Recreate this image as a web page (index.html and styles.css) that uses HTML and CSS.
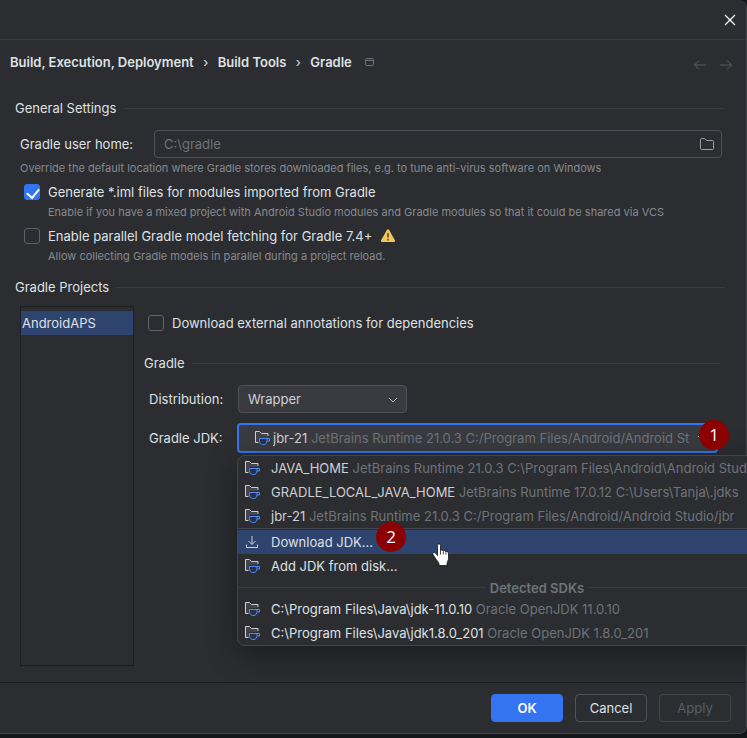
FILE: index.html
```html
<!DOCTYPE html>
<html lang="en">
<head>
    <meta charset="UTF-8">
    <meta name="viewport" content="width=device-width, initial-scale=1.0">
    <title>Settings - Gradle</title>
    <link rel="stylesheet" href="styles.css">
</head>

<body>
    <!-- shared icons -->
    <svg class="sprite" aria-hidden="true">
        <symbol id="folder" viewBox="0 0 16 16">
            <path d="M1.5 12.5v-9c0-.6.4-1 1-1h3.3l1.7 2h6c.6 0 1 .4 1 1v7c0 .6-.4 1-1 1h-11c-.6 0-1-.4-1-1z" fill="none" stroke="currentColor"/>
        </symbol>
        <symbol id="jdk" viewBox="0 0 16 16">
            <path d="M1.5 1.5h4l2 2H14V7H5v5.500H1.500z" fill="#43454a"/>
            <path d="M4.500 12.500h-3v-11h4l2 2h6.500v2.500" fill="none" stroke="#ced0d6"/>
            <path d="M5.500 8.500h7.500v2c0 2.500-1.300 4-3 4H8.500c-1.700 0-3-1.500-3-4z" fill="#25324d" stroke="#548af7"/>
            <path d="M13 8.500h2.500v2.500H13" fill="none" stroke="#548af7"/>
        </symbol>
        <symbol id="download" viewBox="0 0 16 16">
            <path d="M8 2v8M4.500 7 8 10.500 11.500 7M2.500 10.500v3h11v-3" fill="none" stroke="#ced0d6"/>
        </symbol>
    </svg>

    <div class="window">
        <header class="titlebar">
            <button class="icon_btn close_btn" aria-label="Close">
                <svg width="12" height="12" viewBox="0 0 12 12"><path d="M1 1l10 10M11 1L1 11" stroke="#fff" stroke-width="1.200"/></svg>
            </button>
        </header>

        <nav class="breadcrumb">
            <a href="#">Build, Execution, Deployment</a>
            <span class="arrow">›</span>
            <a href="#">Build Tools</a>
            <span class="arrow">›</span>
            <a href="#">Gradle</a>
            <svg class="project_icon" width="10" height="10" viewBox="0 0 10 10"><rect x=".5" y="1.500" width="8" height="7" rx="1" fill="none" stroke="#6f737a"/><path d="M1 3.500h8" stroke="#6f737a"/></svg>
            <div class="history">
                <button class="icon_btn" aria-label="Back" disabled>
                    <svg width="14" height="12" viewBox="0 0 14 12"><path d="M13 6H1.500M6 1.500L1.500 6 6 10.500" fill="none" stroke="#5a5d63"/></svg>
                </button>
                <button class="icon_btn" aria-label="Forward" disabled>
                    <svg width="14" height="12" viewBox="0 0 14 12"><path d="M1 6h11.500M8 1.500L12.500 6 8 10.500" fill="none" stroke="#5a5d63"/></svg>
                </button>
            </div>
        </nav>

        <main class="content">
            <h2 class="section">General Settings</h2>
            <div class="general">
                <div class="home_row">
                    <label for="home">Gradle user home:</label>
                    <div class="path_field">
                        <input type="text" id="home" placeholder="C:\gradle">
                        <button class="icon_btn" aria-label="Browse"><svg width="16" height="16"><use href="#folder"/></svg></button>
                    </div>
                </div>
                <p class="hint">Override the default location where Gradle stores downloaded files, e.g. to tune anti-virus software on Windows</p>
                <label class="check"><input type="checkbox" checked>Generate *.iml files for modules imported from Gradle</label>
                <p class="hint indent">Enable if you have a mixed project with Android Studio modules and Gradle modules so that it could be shared via VCS</p>
                <label class="check">
                    <input type="checkbox">Enable parallel Gradle model fetching for Gradle 7.4+
                    <svg class="warning" width="16" height="16" viewBox="0 0 16 16"><path d="M7 1.800a1.150 1.150 0 0 1 2 0l5.900 10.400c.5.800-.1 1.800-1 1.800H2.100c-.9 0-1.500-1-1-1.800z" fill="#f2c55c"/><path d="M8 5v4.500M8 10.800v1.700" stroke="#5e4d33" stroke-width="1.600"/></svg>
                </label>
                <p class="hint indent">Allow collecting Gradle models in parallel during a project reload.</p>
            </div>

            <h2 class="section">Gradle Projects</h2>
            <div class="projects">
                <ul class="project_list">
                    <li class="selected">AndroidAPS</li>
                </ul>
                <div class="details">
                    <label class="check"><input type="checkbox">Download external annotations for dependencies</label>
                    <h2 class="section">Gradle</h2>
                    <div class="form">
                        <label for="distribution">Distribution:</label>
                        <div class="select_box">
                            <select id="distribution">
                                <option>Wrapper</option>
                            </select>
                            <svg class="chevron" width="10" height="8" viewBox="0 0 10 8"><path d="M1 2l4 4 4-4" fill="none" stroke="#b4b8bf"/></svg>
                        </div>

                        <label for="jdk_combo">Gradle JDK:</label>
                        <div class="jdk">
                            <button class="combo" id="jdk_combo" role="combobox" aria-expanded="true" aria-controls="jdk_menu">
                                <svg width="16" height="16"><use href="#jdk"/></svg>
                                <span class="value">jbr-21 <span class="muted">JetBrains Runtime 21.0.3 C:/Program Files/Android/Android Studio/jbr</span></span>
                                <svg width="10" height="8" viewBox="0 0 10 8"><path d="M1 2l4 4 4-4" fill="none" stroke="#b4b8bf"/></svg>
                            </button>
                            <span class="badge badge_combo">1</span>

                            <div class="menu" id="jdk_menu">
                                <button><svg width="16" height="16"><use href="#jdk"/></svg><span class="soft">JAVA_HOME <span class="muted">JetBrains Runtime 21.0.3 C:\Program Files\Android\Android Studio\jbr</span></span></button>
                                <button><svg width="16" height="16"><use href="#jdk"/></svg><span class="soft">GRADLE_LOCAL_JAVA_HOME <span class="muted">JetBrains Runtime 17.0.12 C:\Users\Tanja\.jdks</span></span></button>
                                <button><svg width="16" height="16"><use href="#jdk"/></svg><span class="soft">jbr-21 <span class="muted">JetBrains Runtime 21.0.3 C:/Program Files/Android/Android Studio/jbr</span></span></button>
                                <hr>
                                <button class="selected">
                                    <svg width="16" height="16"><use href="#download"/></svg><span>Download JDK...</span>
                                    <span class="badge badge_item">2</span>
                                    <svg class="pointer" width="18" height="24" viewBox="0 0 18 24"><path d="M5.500 2.500c0-2 3-2 3 0v5c.5-1 2.600-.8 2.800.6.800-.8 2.400-.4 2.600.8.900-.6 2.600-.1 2.600 1.500v5c0 2.200-1.500 3.400-1.500 5.100v2H7v-1.500c0-1.700-2.600-3.700-3.600-5.700L1 11.500c-.8-1.700 1.300-2.700 2.500-1.400l2 2.400z" fill="#fff" stroke="#111" stroke-width=".8"/><path d="M8.500 7.500v4M11.300 8.500v3M13.900 9.500v2" stroke="#111" stroke-width=".8"/></svg>
                                </button>
                                <button><svg width="16" height="16"><use href="#jdk"/></svg><span>Add JDK from disk...</span></button>
                                <div class="menu_title">Detected SDKs</div>
                                <button><svg width="16" height="16"><use href="#jdk"/></svg><span>C:\Program Files\Java\jdk-11.0.10 <span class="muted">Oracle OpenJDK 11.0.10</span></span></button>
                                <button><svg width="16" height="16"><use href="#jdk"/></svg><span>C:\Program Files\Java\jdk1.8.0_201 <span class="muted">Oracle OpenJDK 1.8.0_201</span></span></button>
                            </div>
                        </div>
                    </div>
                </div>
            </div>
        </main>

        <footer class="buttons">
            <button class="btn primary">OK</button>
            <button class="btn">Cancel</button>
            <button class="btn" disabled>Apply</button>
        </footer>
    </div>
</body>
</html>
```
FILE: styles.css
```css
* {
    box-sizing: border-box;
}

body {
    margin: 0;
    padding-bottom: 4px;
    min-height: 100vh;
    display: flex;
    background: #151619;
    color: #dfe1e5;
    font-family: Inter, "Liberation Sans", sans-serif;
    font-size: 13px;
    line-height: 16px;
    overflow: hidden;
}

button, input, select {
    margin: 0;
    font: inherit;
    color: inherit;
}

h2, p, ul {
    margin: 0;
    padding: 0;
}

.sprite {
    position: absolute;
    width: 0;
    height: 0;
}

.window {
    flex: 1;
    min-width: 0;
    display: flex;
    flex-direction: column;
    background: #2b2d30;
    border: 1px solid #43454a;
    border-width: 0 1px 1px 0;
    border-radius: 0 8px 8px 0;
}

.titlebar {
    display: flex;
    justify-content: flex-end;
    align-items: center;
    height: 40px;
    padding: 0 10px;
    border-bottom: 1px solid #393b40;
}

.icon_btn {
    display: flex;
    padding: 0;
    border: 0;
    background: none;
}

/* breadcrumb */
.breadcrumb {
    display: flex;
    align-items: center;
    height: 44px;
    padding: 0 13px 0 10px;
    font-weight: 600;
}

.breadcrumb a {
    color: inherit;
    text-decoration: none;
}

.arrow {
    width: 24px;
    font-weight: 400;
    text-align: center;
}

.project_icon {
    margin-left: 13px;
}

.history {
    display: flex;
    gap: 12px;
    margin-left: auto;
    padding-top: 6px;
}

/* content */
.content {
    flex: 1;
    padding: 16px 21px 16px 15px;
}

.section {
    display: flex;
    align-items: center;
    gap: 7px;
    font-size: 13px;
    font-weight: 400;
}

.section::after {
    content: "";
    flex: 1;
    height: 1px;
    background: #393b40;
}

.general {
    padding: 14px 3px 15px 5px;
}

.home_row {
    display: flex;
    align-items: center;
    gap: 18px;
}

.home_row label {
    width: 116px;
}

.path_field {
    flex: 1;
    display: flex;
    align-items: center;
    height: 28px;
    padding: 0 6px 0 9px;
    border: 1px solid #4e5157;
    border-radius: 4px;
    color: #9da0a8;
}

.path_field input {
    flex: 1;
    padding: 0;
    border: 0;
    background: none;
    outline: none;
}

.path_field input::placeholder {
    color: #6f737a;
    opacity: 1;
}

.hint {
    padding-top: 2px;
    font-size: 11px;
    line-height: 16px;
    color: #868a91;
}

.indent {
    padding-left: 28px;
}

.check {
    display: flex;
    align-items: center;
    gap: 8px;
    height: 24px;
    margin-left: 4px;
}

.hint + .check {
    margin-top: 6px;
    height: 20px;
}

.check input {
    appearance: none;
    width: 16px;
    height: 16px;
    border: 1px solid #5f6269;
    border-radius: 3px;
}

.check input:checked {
    border-color: #3574f0;
    background: #3574f0;
}

.check input:checked::after {
    content: "";
    display: block;
    width: 6px;
    height: 10px;
    margin: 1px 0 0 4px;
    border: solid #fff;
    border-width: 0 2px 2px 0;
    transform: rotate(40deg);
}

.projects {
    display: flex;
    gap: 10px;
    padding: 11px 5px 0;
}

.project_list {
    width: 114px;
    height: 360px;
    padding-top: 4px;
    border: 1px solid #1e1f22;
    list-style: none;
}

.project_list li {
    padding: 4px 1px;
}

.selected {
    background: #2e436e;
}

.details {
    flex: 1;
    min-width: 0;
    padding-top: 5px;
}

.details .section {
    padding: 20px 0 14px;
}

.form {
    display: grid;
    grid-template-columns: 84px minmax(0, 1fr);
    gap: 10px 5px;
    align-items: center;
    padding-left: 5px;
}

.select_box {
    position: relative;
    width: 169px;
}

.select_box select {
    appearance: none;
    display: block;
    width: 100%;
    height: 28px;
    padding: 0 9px;
    border: 1px solid #4e5157;
    border-radius: 4px;
    background: #393b40;
    color: #ced0d6;
}

.chevron {
    position: absolute;
    right: 9px;
    top: 11px;
}

.jdk {
    position: relative;
    margin: 0 2px 0 -1px;
}

.combo {
    display: flex;
    align-items: center;
    gap: 3px;
    width: 100%;
    height: 30px;
    padding: 0 9px 0 15px;
    border: 2px solid #3574f0;
    border-radius: 4px;
    background: #393b40;
    color: #ced0d6;
    text-align: left;
}

.combo svg {
    flex-shrink: 0;
}

.value {
    flex: 1;
    margin-right: 4px;
    overflow: hidden;
    white-space: nowrap;
}

.muted {
    color: #6f737a;
}

.soft {
    color: #ced0d6;
}

/* JDK popup, runs past the right edge of the dialog */
.menu {
    position: absolute;
    z-index: 1;
    top: 32px;
    left: 0;
    width: 600px;
    border: 1px solid #43454a;
    border-radius: 8px;
    background: #2b2d30;
    box-shadow: 0 8px 30px rgba(0, 0, 0, 0.4);
    white-space: nowrap;
}

.menu button {
    position: relative;
    display: flex;
    align-items: center;
    gap: 11px;
    width: 100%;
    height: 24px;
    padding: 0 6px;
    border: 0;
    background: none;
    text-align: left;
}

.menu .selected {
    background: #2e436e;
}

.menu hr {
    height: 1px;
    margin: 0 0 1px;
    border: 0;
    background: #43454a;
}

.menu_title {
    display: flex;
    align-items: center;
    gap: 4px;
    height: 19px;
    color: #6f737a;
    font-weight: 600;
}

.menu_title::before,
.menu_title::after {
    content: "";
    flex: 1;
    height: 1px;
    background: #393b40;
}

.badge {
    position: absolute;
    z-index: 2;
    width: 30px;
    height: 30px;
    border-radius: 50%;
    background: #8b0000;
    color: #fff;
    font-family: "Open Sans", sans-serif;
    font-size: 17px;
    line-height: 30px;
    text-align: center;
}

.badge_combo {
    top: -3px;
    right: -11px;
}

.badge_item {
    top: -8px;
    left: 138px;
}

.pointer {
    position: absolute;
    top: 13px;
    left: 194px;
}

/* footer */
.buttons {
    display: flex;
    justify-content: flex-end;
    gap: 12px;
    padding: 11px 15px;
    border-top: 1px solid #1e1f22;
}

.btn {
    width: 72px;
    height: 28px;
    padding: 0;
    border: 1px solid #4e5157;
    border-radius: 4px;
    background: none;
}

.btn.primary {
    border-color: #3574f0;
    background: #3574f0;
    color: #fff;
    font-weight: 600;
}

.btn:disabled {
    border-color: #43454a;
    color: #5a5d63;
}
```
